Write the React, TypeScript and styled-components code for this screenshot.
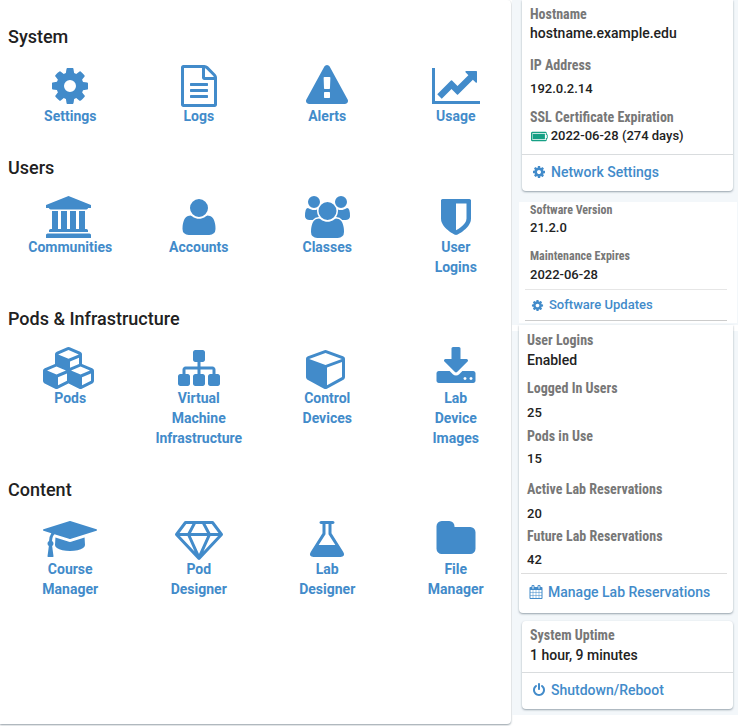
import React from "react";
import styled, { createGlobalStyle } from "styled-components";

const blue = "#428bca";

const GlobalStyle = createGlobalStyle`
  *, *::before, *::after { box-sizing: border-box; }
  body {
    margin: 0;
    background: #fff;
    color: #222;
    font-family: Roboto, "Liberation Sans", sans-serif;
    font-size: 14px;
    line-height: 20px;
  }
`;

type IconShape = { box: number; d: string };

const icons: Record<string, IconShape> = {
  cog: { box: 1792, d: "M1152 896q0-106-75-181t-181-75-181 75-75 181 75 181 181 75 181-75 75-181zm512-109v222q0 12-8 23t-20 13l-185 28q-19 54-39 91 35 50 107 138 10 12 10 25t-9 23q-27 37-99 108t-94 71q-12 0-26-9l-138-108q-44 23-91 38-16 136-29 186-7 28-36 28h-222q-14 0-24.5-8.5t-11.5-21.5l-28-184q-49-16-90-37l-141 107q-10 9-25 9-14 0-25-11-126-114-165-168-7-10-7-23 0-12 8-23 15-21 51-66.5t54-70.5q-27-50-41-99l-183-27q-13-2-21-12.5t-8-23.5v-222q0-12 8-23t19-13l186-28q14-46 39-92-40-57-107-138-10-12-10-24 0-10 9-23 26-36 98.5-107.5t94.5-71.5q13 0 26 10l138 107q44-23 91-38 16-136 29-186 7-28 36-28h222q14 0 24.5 8.5t11.5 21.5l28 184q49 16 90 37l142-107q9-9 24-9 13 0 25 10 129 119 165 170 7 8 7 22 0 12-8 23-15 21-51 66.5t-54 70.5q26 50 41 98l183 28q13 2 21 12.5t8 23.5z" },
  log: { box: 1792, d: "M1596 380q28 28 48 76t20 88v1152q0 40-28 68t-68 28h-1344q-40 0-68-28t-28-68v-1600q0-40 28-68t68-28h896q40 0 88 20t76 48zm-444-244v376h376q-10-29-22-41l-313-313q-12-12-41-22zm384 1528v-1024h-416q-40 0-68-28t-28-68v-416h-768v1536h1280zm-1024-864q0-14 9-23t23-9h704q14 0 23 9t9 23v64q0 14-9 23t-23 9h-704q-14 0-23-9t-9-23v-64zm736 224q14 0 23 9t9 23v64q0 14-9 23t-23 9h-704q-14 0-23-9t-9-23v-64q0-14 9-23t23-9h704zm0 256q14 0 23 9t9 23v64q0 14-9 23t-23 9h-704q-14 0-23-9t-9-23v-64q0-14 9-23t23-9h704z" },
  alert: { box: 1792, d: "M1024 1375v-190q0-14-9.5-23.5t-22.5-9.5h-192q-13 0-22.5 9.5t-9.5 23.5v190q0 14 9.5 23.5t22.5 9.5h192q13 0 22.5-9.5t9.5-23.5zm-2-374l18-459q0-12-10-19-13-11-24-11h-220q-11 0-24 11-10 7-10 21l17 457q0 10 10 16.5t24 6.5h185q14 0 23.5-6.5t10.5-16.5zm-14-934l768 1408q35 63-2 126-17 29-46.5 46t-63.5 17h-1536q-34 0-63.5-17t-46.5-46q-37-63-2-126l768-1408q17-31 47-49t65-18 65 18 47 49z" },
  chart: { box: 2048, d: "M2048 1536v128h-2048v-1536h128v1408h1920zm-128-1248v435q0 21-19.5 29.5t-35.5-7.5l-121-121-633 633q-10 10-23 10t-23-10l-233-233-416 416-192-192 585-585q10-10 23-10t23 10l233 233 464-464-121-121q-16-16-7.5-35.5t29.5-19.5h435q14 0 23 9t9 23z" },
  university: { box: 2048, d: "M960 0l960 384v128h-128q0 26-20.5 45t-48.5 19h-1526q-28 0-48.5-19t-20.5-45h-128v-128zm-704 640h256v768h128v-768h256v768h128v-768h256v768h128v-768h256v768h59q28 0 48.5 19t20.5 45v64h-1664v-64q0-26 20.5-45t48.5-19h59v-768zm1595 960q28 0 48.5 19t20.5 45v128h-1920v-128q0-26 20.5-45t48.5-19h1782z" },
  user: { box: 1792, d: "M1600 1405q0 120-73 189.5t-194 69.5h-874q-121 0-194-69.5t-73-189.5q0-53 3.5-103.5t14-109 26.5-108.5 43-97.5 62-81 85.5-53.5 111.5-20q9 0 42 21.5t74.5 48 108 48 133.5 21.5 133.5-21.5 108-48 74.5-48 42-21.5q61 0 111.5 20t85.5 53.5 62 81 43 97.5 26.5 108.5 14 109 3.5 103.5zm-320-893q0 159-112.5 271.5t-271.5 112.5-271.5-112.5-112.5-271.5 112.5-271.5 271.5-112.5 271.5 112.5 112.5 271.5z" },
  users: { box: 1920, d: "M593 896q-162 5-265 128h-134q-82 0-138-40.5t-56-118.5q0-353 124-353 6 0 43.5 21t97.5 42.5 119 21.5q67 0 133-23-5 37-5 66 0 139 81 256zm1071 637q0 120-73 189.5t-194 69.5h-874q-121 0-194-69.5t-73-189.5q0-53 3.5-103.5t14-109 26.5-108.5 43-97.5 62-81 85.5-53.5 111.5-20q10 0 43 21.5t73 48 107 48 135 21.5 135-21.5 107-48 73-48 43-21.5q61 0 111.5 20t85.5 53.5 62 81 43 97.5 26.5 108.5 14 109 3.5 103.5zm-1024-1277q0 106-75 181t-181 75-181-75-75-181 75-181 181-75 181 75 75 181zm704 384q0 159-112.5 271.5t-271.5 112.5-271.5-112.5-112.5-271.5 112.5-271.5 271.5-112.5 271.5 112.5 112.5 271.5zm576 225q0 78-56 118.5t-138 40.5h-134q-103-123-265-128 81-117 81-256 0-29-5-66 66 23 133 23 59 0 119-21.5t97.5-42.5 43.5-21q124 0 124 353zm-128-609q0 106-75 181t-181 75-181-75-75-181 75-181 181-75 181 75 75 181z" },
  shield: { box: 1792, d: "M1344 960v-640h-448v1137q119-63 213-137 235-184 235-360zm192-768v768q0 86-33.5 170.5t-83 150-118 127.5-126.5 103-121 77.5-89.5 49.5-42.5 20q-12 6-26 6t-26-6q-16-7-42.5-20t-89.5-49.5-121-77.5-126.5-103-118-127.5-83-150-33.5-170.5v-768q0-26 19-45t45-19h1152q26 0 45 19t19 45z" },
  cubes: { box: 2304, d: "M640 1632l384-192v-314l-384 164v342zm-64-454l404-173-404-173-404 173zm1088 454l384-192v-314l-384 164v342zm-64-454l404-173-404-173-404 173zm-448-293l384-165v-266l-384 164v267zm-64-379l441-189-441-189-441 189zm1088 518v416q0 36-19 67t-52 47l-448 224q-25 14-57 14t-57-14l-448-224q-4-2-7-4-2 2-7 4l-448 224q-25 14-57 14t-57-14l-448-224q-33-16-52-47t-19-67v-416q0-38 21.5-70t56.5-48l434-186v-400q0-38 21.5-70t56.5-48l448-192q23-10 50-10t50 10l448 192q35 16 56.5 48t21.5 70v400l434 186q36 16 57 48t21 70z" },
  sitemap: { box: 1792, d: "M1792 1248v320q0 40-28 68t-68 28h-320q-40 0-68-28t-28-68v-320q0-40 28-68t68-28h96v-192h-512v192h96q40 0 68 28t28 68v320q0 40-28 68t-68 28h-320q-40 0-68-28t-28-68v-320q0-40 28-68t68-28h96v-192h-512v192h96q40 0 68 28t28 68v320q0 40-28 68t-68 28h-320q-40 0-68-28t-28-68v-320q0-40 28-68t68-28h96v-192q0-52 38-90t90-38h512v-192h-96q-40 0-68-28t-28-68v-320q0-40 28-68t68-28h320q40 0 68 28t28 68v320q0 40-28 68t-68 28h-96v192h512q52 0 90 38t38 90v192h96q40 0 68 28t28 68z" },
  cube: { box: 1792, d: "M896 1629l640-349v-636l-640 233v752zm-64-865l698-254-698-254-698 254zm832-252v768q0 35-18 65t-49 47l-704 384q-28 16-61 16t-61-16l-704-384q-31-17-49-47t-18-65v-768q0-40 23-73t61-47l704-256q22-8 44-8t44 8l704 256q38 14 61 47t23 73z" },
  download: { box: 1792, d: "M1344 1344q0-26-19-45t-45-19-45 19-19 45 19 45 45 19 45-19 19-45zm256 0q0-26-19-45t-45-19-45 19-19 45 19 45 45 19 45-19 19-45zm128-224v320q0 40-28 68t-68 28h-1472q-40 0-68-28t-28-68v-320q0-40 28-68t68-28h465l135 136q58 56 136 56t136-56l136-136h464q40 0 68 28t28 68zm-325-569q17 41-14 70l-448 448q-18 19-45 19t-45-19l-448-448q-31-29-14-70 17-39 59-39h256v-448q0-26 19-45t45-19h256q26 0 45 19t19 45v448h256q42 0 59 39z" },
  graduation: { box: 2304, d: "M1774 836l18 316q4 69-82 128t-235 93.5-323 34.5-323-34.5-235-93.5-82-128l18-316 574 181q22 7 48 7t48-7zm530-324q0 23-22 31l-1120 352q-4 1-10 1t-10-1l-652-206q-43 34-71 111.5t-34 178.5q63 36 63 109 0 69-58 107l58 433q2 14-8 25-9 11-24 11h-192q-15 0-24-11-10-11-8-25l58-433q-58-38-58-107 0-73 65-111 11-207 98-330l-333-104q-22-8-22-31t22-31l1120-352q4-1 10-1t10 1l1120 352q22 8 22 31z" },
  diamond: { box: 2048, d: "M212 768l623 665-300-665h-323zm812 772l349-772h-698zm-486-900l204-384h-262l-288 384h346zm675 793l623-665h-323zm-530-793h682l-204-384h-274zm827 0h346l-288-384h-262zm141-486l384 512q14 18 13 41.5t-17 40.5l-960 1024q-18 20-47 20t-47-20l-960-1024q-16-17-17-40.5t13-41.5l384-512q18-26 51-26h1152q33 0 51 26z" },
  flask: { box: 1792, d: "M1591 1448q56 89 21.5 152.5t-140.5 63.5h-1152q-106 0-140.5-63.5t21.5-152.5l503-793v-399h-64q-26 0-45-19t-19-45 19-45 45-19h512q26 0 45 19t19 45-19 45-45 19h-64v399zm-779-725l-272 429h712l-272-429-20-31v-436h-128v436z" },
  folder: { box: 1792, d: "M1728 608v704q0 92-66 158t-158 66h-1216q-92 0-158-66t-66-158v-960q0-92 66-158t158-66h320q92 0 158 66t66 158v32h672q92 0 158 66t66 158z" },
  calendar: { box: 1792, d: "M192 1664h288v-288h-288v288zm352 0h320v-288h-320v288zm-352-352h288v-320h-288v320zm352 0h320v-320h-320v320zm-352-384h288v-288h-288v288zm736 736h320v-288h-320v288zm-384-736h320v-288h-320v288zm768 736h288v-288h-288v288zm-384-352h320v-320h-320v320zm-352-864v-288q0-13-9.5-22.5t-22.5-9.5h-64q-13 0-22.5 9.5t-9.5 22.5v288q0 13 9.5 22.5t22.5 9.5h64q13 0 22.5-9.5t9.5-22.5zm736 864h288v-320h-288v320zm-384-384h320v-288h-320v288zm384 0h288v-288h-288v288zm32-480v-288q0-13-9.5-22.5t-22.5-9.5h-64q-13 0-22.5 9.5t-9.5 22.5v288q0 13 9.5 22.5t22.5 9.5h64q13 0 22.5-9.5t9.5-22.5zm384-64v1280q0 52-38 90t-90 38h-1408q-52 0-90-38t-38-90v-1280q0-52 38-90t90-38h128v-96q0-66 47-113t113-47h64q66 0 113 47t47 113v96h384v-96q0-66 47-113t113-47h64q66 0 113 47t47 113v96h128q52 0 90 38t38 90z" },
  power: { box: 1792, d: "M1664 896q0 156-61 298t-164 245-245 164-298 61-298-61-245-164-164-245-61-298q0-182 80.5-343t226.5-270q43-32 95.5-25t83.5 50q32 42 24.5 94.5t-49.5 84.5q-98 74-151.5 181t-53.5 228q0 104 40.5 198.5t109.5 163.5 163.5 109.5 198.5 40.5 198.5-40.5 163.5-109.5 109.5-163.5 40.5-198.5q0-121-53.5-228t-151.5-181q-42-32-49.5-84.5t24.5-94.5q31-43 84-50t95 25q146 109 226.5 270t80.5 343zm-640-768v640q0 52-38 90t-90 38-90-38-38-90v-640q0-52 38-90t90-38 90 38 38 90z" },
  battery: { box: 2304, d: "M1920 512v768h-1664v-768h1664zm128 576h128v-384h-128v-288h-1856v960h1856v-288zm256-384v384q0 53-37.5 90.5t-90.5 37.5v160q0 66-47 113t-113 47h-1856q-66 0-113-47t-47-113v-960q0-66 47-113t113-47h1856q66 0 113 47t47 113v160q53 0 90.5 37.5t37.5 90.5z" },
};

const Glyph = styled.svg<{ $size: number }>`
  display: block;
  flex: none;
  height: ${(p) => p.$size}px;
  fill: currentColor;
`;

function Icon({ name, size }: { name: string; size: number }) {
  const { box, d } = icons[name];
  return (
    <Glyph $size={size} viewBox={`0 0 ${box} 1792`} aria-hidden="true">
      <path d={d} />
    </Glyph>
  );
}

const Page = styled.div`
  display: grid;
  grid-template-columns: minmax(0, 1fr) 226px;
  min-height: 100vh;
`;

const Panel = styled.main`
  margin: 0 1px 2px 0;
  padding: 25px 0 0;
  background: #fff;
  border-radius: 0 4px 4px 0;
  box-shadow: 0 1px 2px rgba(60, 80, 95, 0.55);
`;

const Section = styled.section`
  margin-bottom: 30px;
`;

const Heading = styled.h2`
  margin: 0 0 16px 8px;
  font-size: 18px;
  font-weight: 500;
  line-height: 24px;
  color: #212121;
`;

const Tiles = styled.nav`
  display: grid;
  grid-template-columns: repeat(4, minmax(0, 1fr));
  margin: 0 -9px 0 6px;
`;

const Tile = styled.a`
  display: flex;
  flex-direction: column;
  align-items: center;
  padding: 0 20px;
  color: ${blue};
  font-weight: 700;
  text-align: center;
  text-decoration: none;
`;

const TileLabel = styled.span`
  margin-top: -1px;
`;

const Sidebar = styled.aside`
  align-self: start;
  padding-bottom: 6px;
  background: #f3f7fa;
`;

const Card = styled.section<{ $flush?: boolean }>`
  margin: 0 5px 0 ${(p) => (p.$flush ? 7 : 10)}px;
  background: #fff;
  border-radius: 0 0 4px 4px;
  box-shadow: 0 1px 2px rgba(60, 80, 95, 0.5);
`;

const UptimeCard = styled(Card)`
  margin-top: 8px;
  border-radius: 4px;
`;

const PlainCard = styled.section`
  margin: 11px 1px 2px 7px;
  padding-bottom: 2px;
  background: #fff;
`;

const Band = styled.div`
  background: linear-gradient(#fff 6px, transparent 6px);
`;

const Fields = styled.dl<{ $pad: string }>`
  margin: 0;
  padding: ${(p) => p.$pad};
`;

const Field = styled.div<{ $before?: number; $gap?: number }>`
  display: flex;
  flex-direction: column;
  gap: ${(p) => p.$gap ?? 0}px;
  margin-top: ${(p) => p.$before ?? 0}px;
`;

const Term = styled.dt<{ $small?: boolean }>`
  color: #777;
  font-family: "Roboto Condensed", Roboto, sans-serif;
  font-size: ${(p) => (p.$small ? 12 : 14)}px;
  font-weight: 700;
  line-height: ${(p) => (p.$small ? 16 : 18)}px;
`;

const Value = styled.dd<{ $size?: number }>`
  display: flex;
  align-items: center;
  gap: 3px;
  margin: 0;
  color: #222;
  font-size: ${(p) => p.$size ?? 14}px;
  font-weight: 500;
`;

const Charge = styled.span`
  color: #16a085;
  padding-left: 1px;
`;

const Footer = styled.footer<{ $tall?: boolean }>`
  border-top: 1px solid #d9dcde;
  height: ${(p) => (p.$tall ? 40 : 37)}px;
  padding-bottom: 2px;
  display: flex;
  align-items: center;
`;

const InsetFooter = styled(Footer)`
  margin: 0 6px 0 2px;
  border-top-color: #ddd;
  padding-bottom: 4px;
`;

const PlainFooter = styled(Footer)`
  height: 32px;
  padding-bottom: 0;
  margin: 0 10px 0 6px;
  border-top-color: #e6e6e6;
  border-bottom: 1px solid #ccc;
`;

const Action = styled.a<{ $left: number; $small?: boolean }>`
  display: flex;
  align-items: center;
  gap: 5px;
  padding-left: ${(p) => p.$left}px;
  color: ${blue};
  font-size: ${(p) => (p.$small ? 13 : 14)}px;
  font-weight: 500;
  text-decoration: none;
`;

const sections = [
  { title: "System", tiles: [["cog", "Settings"], ["log", "Logs"], ["alert", "Alerts"], ["chart", "Usage"]] },
  { title: "Users", tiles: [["university", "Communities"], ["user", "Accounts"], ["users", "Classes"], ["shield", "User Logins"]] },
  {
    title: "Pods & Infrastructure",
    tiles: [["cubes", "Pods"], ["sitemap", "Virtual Machine Infrastructure"], ["cube", "Control Devices"], ["download", "Lab Device Images"]],
  },
  { title: "Content", tiles: [["graduation", "Course Manager"], ["diamond", "Pod Designer"], ["flask", "Lab Designer"], ["folder", "File Manager"]] },
];

export default function App() {
  return (
    <>
      <GlobalStyle />
      <Page>
        <Panel>
          {sections.map((s) => (
            <Section key={s.title}>
              <Heading>{s.title}</Heading>
              <Tiles aria-label={s.title}>
                {s.tiles.map(([icon, label]) => (
                  <Tile key={label} href="#">
                    <Icon name={icon} size={42} />
                    <TileLabel>
                      {label.split(" ").map((word, i) => (
                        <React.Fragment key={word}>
                          {i > 0 && <br />}
                          {word}
                        </React.Fragment>
                      ))}
                    </TileLabel>
                  </Tile>
                ))}
              </Tiles>
            </Section>
          ))}
        </Panel>

        <Sidebar>
          <Card>
            <Fields $pad="5px 8px 8px">
              <Field>
                <Term>Hostname</Term>
                <Value>hostname.example.edu</Value>
              </Field>
              <Field $before={13} $gap={5}>
                <Term>IP Address</Term>
                <Value $size={13}>192.0.2.14</Value>
              </Field>
              <Field $before={9}>
                <Term>SSL Certificate Expiration</Term>
                <Value $size={13}>
                  <Charge>
                    <Icon name="battery" size={13} />
                  </Charge>
                  2022-06-28 (274 days)
                </Value>
              </Field>
            </Fields>
            <Footer>
              <Action href="#" $left={10}>
                <Icon name="cog" size={14} />
                Network Settings
              </Action>
            </Footer>
          </Card>

          <PlainCard>
            <Fields $pad="0 11px 4px">
              <Field>
                <Term $small>Software Version</Term>
                <Value $size={13}>21.2.0</Value>
              </Field>
              <Field $before={10} $gap={1}>
                <Term $small>Maintenance Expires</Term>
                <Value $size={13}>2022-06-28</Value>
              </Field>
            </Fields>
            <PlainFooter>
              <Action href="#" $left={6} $small>
                <Icon name="cog" size={13} />
                Software Updates
              </Action>
            </PlainFooter>
          </PlainCard>

          <Band>
            <Card $flush>
              <Fields $pad="6px 8px 3px">
                <Field $gap={1}>
                  <Term>User Logins</Term>
                  <Value>Enabled</Value>
                </Field>
                <Field $before={9} $gap={6}>
                  <Term>Logged In Users</Term>
                  <Value $size={13}>25</Value>
                </Field>
                <Field $before={4} $gap={4}>
                  <Term>Pods in Use</Term>
                  <Value $size={13}>15</Value>
                </Field>
                <Field $before={11} $gap={6}>
                  <Term>Active Lab Reservations</Term>
                  <Value $size={13}>20</Value>
                </Field>
                <Field $before={3} $gap={5}>
                  <Term>Future Lab Reservations</Term>
                  <Value $size={13}>42</Value>
                </Field>
              </Fields>
              <InsetFooter $tall>
                <Action href="#" $left={8}>
                  <Icon name="calendar" size={14} />
                  Manage Lab Reservations
                </Action>
              </InsetFooter>
            </Card>
          </Band>

          <UptimeCard>
            <Fields $pad="5px 8px 7px">
              <Field $gap={1}>
                <Term>System Uptime</Term>
                <Value>1 hour, 9 minutes</Value>
              </Field>
            </Fields>
            <Footer>
              <Action href="#" $left={10}>
                <Icon name="power" size={14} />
                Shutdown/Reboot
              </Action>
            </Footer>
          </UptimeCard>
        </Sidebar>
      </Page>
    </>
  );
}
